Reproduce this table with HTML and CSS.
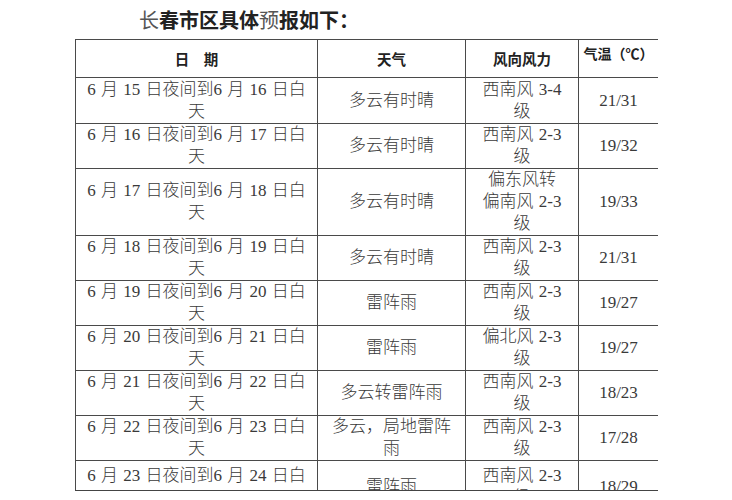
FILE: index.html
```html
<!DOCTYPE html>
<html lang="zh-CN">
<head>
<meta charset="utf-8">
<title>长春市区具体预报</title>
<link rel="stylesheet" href="styles.css">
</head>
<body>
<div class="page">
  <h1 class="title"><span class="thin">长</span>春市区具体<span class="thin">预</span>报如下：</h1>
  <div class="sheet">
    <table class="forecast">
      <colgroup>
        <col class="c-date">
        <col class="c-weather">
        <col class="c-wind">
        <col class="c-temp">
      </colgroup>
      <thead>
        <tr class="head">
          <th>日　期</th>
          <th>天气</th>
          <th>风向风力</th>
          <th class="th-temp">气温（℃）</th>
        </tr>
      </thead>
      <tbody>
        <tr class="r-tall"><td>6 月 15 日夜间到6 月 16 日白<br>天</td><td>多云有时晴</td><td>西南风 3-4<br>级</td><td>21/31</td></tr>
        <tr><td>6 月 16 日夜间到6 月 17 日白<br>天</td><td>多云有时晴</td><td>西南风 2-3<br>级</td><td>19/32</td></tr>
        <tr><td>6 月 17 日夜间到6 月 18 日白<br>天</td><td>多云有时晴</td><td>偏东风转<br>偏南风 2-3<br>级</td><td>19/33</td></tr>
        <tr><td>6 月 18 日夜间到6 月 19 日白<br>天</td><td>多云有时晴</td><td>西南风 2-3<br>级</td><td>21/31</td></tr>
        <tr><td>6 月 19 日夜间到6 月 20 日白<br>天</td><td>雷阵雨</td><td>西南风 2-3<br>级</td><td>19/27</td></tr>
        <tr><td>6 月 20 日夜间到6 月 21 日白<br>天</td><td>雷阵雨</td><td>偏北风 2-3<br>级</td><td>19/27</td></tr>
        <tr><td>6 月 21 日夜间到6 月 22 日白<br>天</td><td>多云转雷阵雨</td><td>西南风 2-3<br>级</td><td>18/23</td></tr>
        <tr><td>6 月 22 日夜间到6 月 23 日白<br>天</td><td>多云，局地雷阵<br>雨</td><td>西南风 2-3<br>级</td><td>17/28</td></tr>
        <tr class="r-last"><td>6 月 23 日夜间到6 月 24 日白<br>天</td><td>雷阵雨</td><td>西南风 2-3<br>级</td><td>18/29</td></tr>
      </tbody>
    </table>
  </div>
</div>
</body>
</html>
```

FILE: styles.css
```css
html, body {
  margin: 0;
  padding: 0;
  background: #ffffff;
}

body {
  font-family: "Liberation Serif", "Noto Sans CJK SC", serif;
  color: #333333;
}

.page {
  width: 732px;
  height: 500px;
  overflow: hidden;
}

.title {
  margin: 0;
  height: 39px;
  line-height: 39px;
  padding-left: 139px;
  font-family: "Noto Sans CJK SC", sans-serif;
  font-size: 20px;
  font-weight: 700;
  color: #222222;
}

.title .thin {
  font-weight: 400;
  color: #555555;
}

.sheet {
  margin-left: 75px;
  width: 583px;
  height: 451px;
  overflow: hidden;
  border-bottom: 1px solid #444444;
}

.forecast {
  border-collapse: collapse;
  table-layout: fixed;
  width: 583px;
}

.c-date { width: 242px; }
.c-weather { width: 148px; }
.c-wind { width: 113px; }
.c-temp { width: 80px; }

.forecast th,
.forecast td {
  border: 1px solid #4a4a4a;
  padding: 0 2px;
  text-align: center;
  vertical-align: middle;
}

.forecast td {
  font-size: 17px;
  line-height: 22px;
  word-spacing: 1px;
  font-weight: 300;
  color: #3a3a3a;
}

.forecast th {
  font-family: "Noto Sans CJK SC", sans-serif;
  font-size: 14.5px;
  font-weight: 700;
  line-height: 20px;
  color: #222222;
}

.head {
  height: 38px;
}

.forecast th.th-temp {
  vertical-align: top;
  padding-top: 3px;
  font-size: 14px;
  white-space: nowrap;
}

.r-tall td {
  padding-top: 1px;
}

.r-last td {
  padding-top: 4px;
}
```
